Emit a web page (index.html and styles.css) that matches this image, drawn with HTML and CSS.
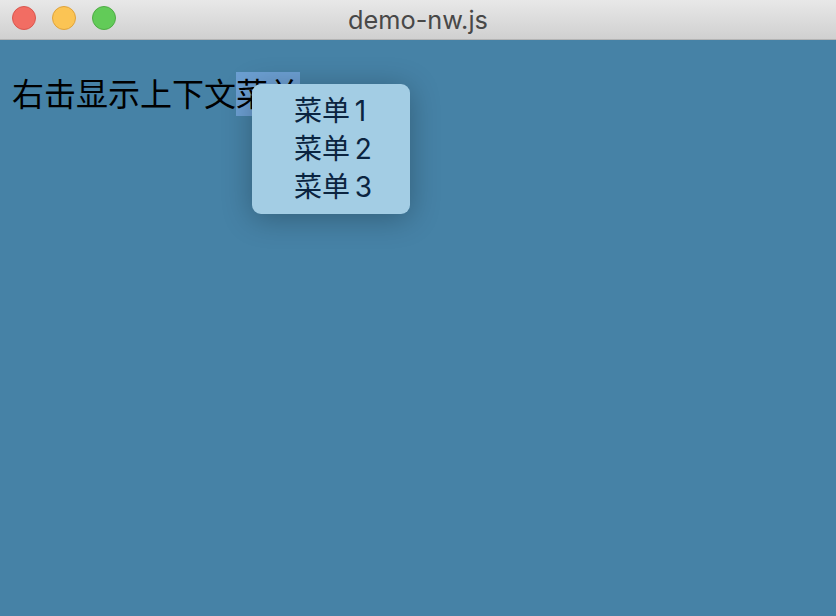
FILE: index.html
```html
<!DOCTYPE html>
<html lang="zh-CN">
<head>
    <meta charset="UTF-8">
    <meta name="viewport" content="width=device-width, initial-scale=1.0">
    <title>demo-nw.js</title>
    <link rel="stylesheet" href="styles.css">
</head>
<body>
    <div class="titlebar">
        <div class="lights">
            <span class="light close"></span>
            <span class="light minimize"></span>
            <span class="light zoom"></span>
        </div>
        <div class="title">demo-nw.js</div>
    </div>

    <div class="content">
        <p class="hint">右击显示上下文<span class="selected">菜单</span></p>
        <ul class="menu">
            <li>菜单 1</li>
            <li>菜单 2</li>
            <li>菜单 3</li>
        </ul>
    </div>
</body>
</html>
```

FILE: styles.css
```css
html, body {
    height: 100%;
}
body {
    margin: 0;
    display: flex;
    flex-direction: column;
    overflow: hidden;
    background-color: #4682a6;
    font-family: "Noto Sans CJK SC", "Inter", sans-serif;
}
.titlebar {
    position: relative;
    display: flex;
    align-items: center;
    justify-content: center;
    flex-shrink: 0;
    height: 40px;
    box-sizing: border-box;
    background: linear-gradient(#e8e8e8, #d0d0d0);
    border-bottom: 1px solid #b4b4b4;
}
.lights {
    position: absolute;
    left: 12px;
    top: 6px;
    display: flex;
    gap: 16px;
}
.light {
    width: 24px;
    height: 24px;
    box-sizing: border-box;
    border-radius: 50%;
    border: 1px solid;
}
.close {
    background-color: #f26d63;
    border-color: #d9574e;
}
.minimize {
    background-color: #fbc454;
    border-color: #dfa33c;
}
.zoom {
    background-color: #62cb58;
    border-color: #4fac45;
}
.title {
    font-family: "Inter", "Liberation Sans", sans-serif;
    font-size: 25.3px;
    color: #484848;
    line-height: 38px;
}
.content {
    position: relative;
    flex-grow: 1;
    padding: 32px 12px 0;
}
.hint {
    margin: 0;
    font-size: 32px;
    line-height: 40px;
    color: #000;
}
.selected {
    display: inline-block;
    padding-bottom: 4px;
    background-color: #6c9fd2;
}
.menu {
    position: absolute;
    left: 252px;
    top: 44px;
    width: 158px;
    box-sizing: border-box;
    display: grid;
    justify-content: center;
    margin: 0;
    padding: 8px 0 8px 4px;
    list-style: none;
    background-color: #a3cde4;
    border-radius: 9px;
    box-shadow: 0 4px 30px rgba(0, 0, 0, 0.28);
    font-family: "Inter", "Noto Sans CJK SC", sans-serif;
    font-size: 28px;
    line-height: 38px;
    word-spacing: -3px;
    color: #0b2440;
}
```
